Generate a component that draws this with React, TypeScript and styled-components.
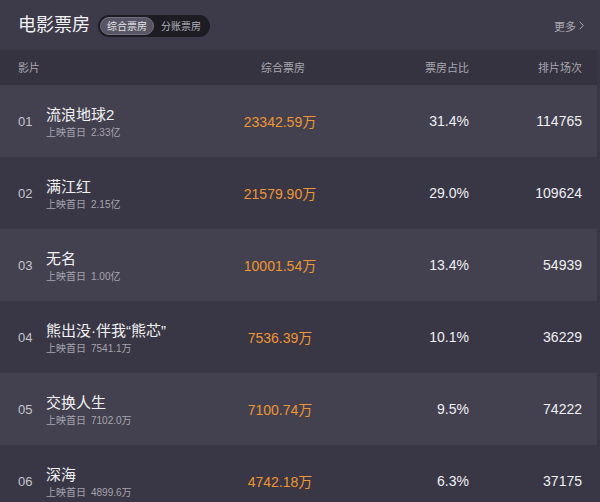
import React from "react";
import styled, { createGlobalStyle } from "styled-components";

const GlobalStyle = createGlobalStyle`
  html, body {
    margin: 0;
    padding: 0;
    background: #393745;
  }
  body {
    width: 600px;
    height: 502px;
    overflow: hidden;
    font-family: "Liberation Sans", "Noto Sans CJK SC", sans-serif;
    -webkit-font-smoothing: antialiased;
  }
`;

const Page = styled.div`
  width: 600px;
  display: flex;
  flex-direction: column;
`;

const TopBar = styled.div`
  height: 50px;
  box-sizing: border-box;
  padding: 0 16px 0 18px;
  background: #3d3b4a;
  display: flex;
  align-items: center;
  justify-content: space-between;
`;

const TitleGroup = styled.div`
  display: flex;
  align-items: center;
  gap: 8px;
`;

const Title = styled.h1`
  margin: 0;
  font-size: 18px;
  font-weight: 400;
  line-height: 24px;
  color: #f2f2f4;
`;

const Pill = styled.div`
  display: flex;
  align-items: center;
  height: 22px;
  box-sizing: border-box;
  padding: 2px;
  border-radius: 11px;
  background: #1d1c23;
  margin-top: 1px;
`;

const Tab = styled.div<{ $active?: boolean }>`
  height: 18px;
  box-sizing: border-box;
  padding: 0 6px;
  border-radius: 9px;
  display: flex;
  align-items: center;
  font-size: 10px;
  color: ${(p) => (p.$active ? "#e6e5ea" : "#b3b2ba")};
  background: ${(p) => (p.$active ? "#575563" : "transparent")};
  border: 1px solid ${(p) => (p.$active ? "#72707e" : "transparent")};
`;

const More = styled.div`
  display: flex;
  align-items: center;
  gap: 3px;
  font-size: 11px;
  color: #a9a8b1;
  margin-top: 1px;
`;

const Table = styled.div`
  width: 597px;
  display: flex;
  flex-direction: column;
`;

const Grid = styled.div`
  display: grid;
  grid-template-columns: 28px 184px 100px 139px 113px;
  padding: 0 15px 0 18px;
  align-items: center;
`;

const HeadRow = styled(Grid)`
  height: 35px;
  background: #35333f;
  font-size: 11px;
  color: #a8a7b0;
`;

const HeadCell = styled.div<{ $align?: string; $span?: number; $pl?: number }>`
  text-align: ${(p) => p.$align || "left"};
  grid-column: ${(p) => (p.$span ? `span ${p.$span}` : "auto")};
  padding-left: ${(p) => p.$pl || 0}px;
  line-height: 16px;
  margin-top: 1px;
`;

const Row = styled(Grid)<{ $odd: boolean }>`
  height: 72px;
  background: ${(p) => (p.$odd ? "#43414f" : "#393745")};
`;

const Rank = styled.div`
  font-size: 13px;
  color: #c6c5cd;
`;

const NameBlock = styled.div`
  display: flex;
  flex-direction: column;
  padding-top: 4px;
  white-space: nowrap;
`;

const Name = styled.div`
  font-size: 15px;
  line-height: 18px;
  color: #f1f1f3;
`;

const Sub = styled.div`
  margin-top: 2px;
  font-size: 10px;
  line-height: 14px;
  color: #a6a5ae;
  display: flex;
  gap: 5px;
`;

const Gross = styled.div`
  text-align: center;
  font-size: 14px;
  color: #ef9531;
`;

const Num = styled.div`
  text-align: right;
  font-size: 14px;
  color: #efeff2;
`;

const Chevron = () => (
  <svg width="5" height="9" viewBox="0 0 5 9" fill="none">
    <path d="M0.8 0.8 L4.2 4.5 L0.8 8.2" stroke="#a9a8b1" strokeWidth="1" />
  </svg>
);

const data = [
  ["01", "流浪地球2", "2.33亿", "23342.59万", "31.4%", "114765"],
  ["02", "满江红", "2.15亿", "21579.90万", "29.0%", "109624"],
  ["03", "无名", "1.00亿", "10001.54万", "13.4%", "54939"],
  ["04", "熊出没·伴我“熊芯”", "7541.1万", "7536.39万", "10.1%", "36229"],
  ["05", "交换人生", "7102.0万", "7100.74万", "9.5%", "74222"],
  ["06", "深海", "4899.6万", "4742.18万", "6.3%", "37175"],
];

export default function App() {
  return (
    <Page>
      <GlobalStyle />
      <TopBar>
        <TitleGroup>
          <Title>电影票房</Title>
          <Pill>
            <Tab $active>综合票房</Tab>
            <Tab>分账票房</Tab>
          </Pill>
        </TitleGroup>
        <More>
          更多
          <Chevron />
        </More>
      </TopBar>
      <Table>
        <HeadRow>
          <HeadCell $span={2}>影片</HeadCell>
          <HeadCell $align="center" $pl={6}>综合票房</HeadCell>
          <HeadCell $align="right">票房占比</HeadCell>
          <HeadCell $align="right">排片场次</HeadCell>
        </HeadRow>
        {data.map((d, i) => (
          <Row key={d[0]} $odd={i % 2 === 0}>
            <Rank>{d[0]}</Rank>
            <NameBlock>
              <Name>{d[1]}</Name>
              <Sub>
                <span>上映首日</span>
                <span>{d[2]}</span>
              </Sub>
            </NameBlock>
            <Gross>{d[3]}</Gross>
            <Num>{d[4]}</Num>
            <Num>{d[5]}</Num>
          </Row>
        ))}
      </Table>
    </Page>
  );
}
